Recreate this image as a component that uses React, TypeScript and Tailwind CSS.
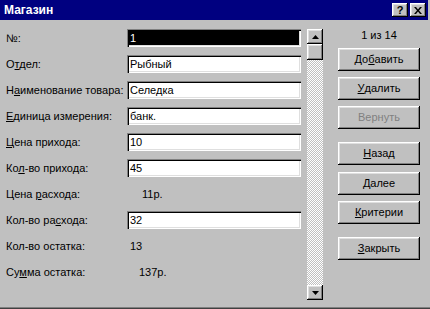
import React from "react";

const raised =
  "shadow-[inset_-1px_-1px_#000,inset_1px_1px_#fff,inset_-2px_-2px_#808080,inset_2px_2px_#dfdfdf]";
const sunken =
  "shadow-[inset_1px_1px_#808080,inset_2px_2px_#000,inset_-1px_-1px_#fff,inset_-2px_-2px_#dfdfdf]";

type Row = {
  label: React.ReactNode;
  value: string;
  kind: "input" | "selected" | "text";
  pad?: string;
};

const rows: Row[] = [
  { label: "№:", value: "1", kind: "selected" },
  { label: <>О<u>т</u>дел:</>, value: "Рыбный", kind: "input" },
  { label: <>Н<u>а</u>именование товара:</>, value: "Селедка", kind: "input" },
  { label: <><u>Е</u>диница измерения:</>, value: "банк.", kind: "input" },
  { label: <><u>Ц</u>ена прихода:</>, value: "10", kind: "input" },
  { label: <>Ко<u>л</u>-во прихода:</>, value: "45", kind: "input" },
  { label: <>Цена <u>р</u>асхода:</>, value: "11р.", kind: "text", pad: "pl-[15px]" },
  { label: <>Кол-во ра<u>с</u>хода:</>, value: "32", kind: "input" },
  { label: "Кол-во остатка:", value: "13", kind: "text", pad: "pl-[3px]" },
  { label: <>Су<u>м</u>ма остатка:</>, value: "137р.", kind: "text", pad: "pl-[12px]" },
];

function Arrow({ down }: { down?: boolean }) {
  return (
    <svg width="7" height="4" viewBox="0 0 7 4">
      {down ? <polygon points="0,0 7,0 3.5,4" fill="#000" /> : <polygon points="0,4 7,4 3.5,0" fill="#000" />}
    </svg>
  );
}

function Btn({
  children,
  className = "",
  disabled,
}: {
  children: React.ReactNode;
  className?: string;
  disabled?: boolean;
}) {
  return (
    <div
      className={`h-[23px] w-[82px] flex items-center justify-center bg-[#c0c0c0] ${raised} ${
        disabled ? "text-[#808080]" : "text-black"
      } ${className}`}
    >
      {children}
    </div>
  );
}

export default function App() {
  return (
    <div className="w-[430px] h-[309px] bg-[#c0c0c0] flex flex-col font-['Liberation_Sans',Arial,sans-serif] text-[11px] text-black shadow-[inset_0_-1px_#404040,inset_0_-2px_#808080] overflow-hidden">
      {/* Title bar */}
      <div className="h-[20px] mr-[2px] bg-[#000080] flex items-center justify-between pl-[4px] pr-[2px]">
        <span className="text-white font-bold text-[12px] leading-none">Магазин</span>
        <div className="flex gap-[2px]">
          <div className={`w-[16px] h-[14px] bg-[#c0c0c0] ${raised} flex items-center justify-center font-bold text-[11px] leading-none`}>
            ?
          </div>
          <div className={`w-[16px] h-[14px] bg-[#c0c0c0] ${raised} flex items-center justify-center`}>
            <svg width="8" height="7" viewBox="0 0 8 7">
              <path d="M0 0h2l2 2.5L6 0h2L5 3.5 8 7H6L4 4.5 2 7H0l3-3.5z" fill="#000" />
            </svg>
          </div>
        </div>
      </div>

      <div className="flex flex-1">
        {/* Fields */}
        <div className="w-[307px] pt-[5px] flex flex-col">
          {rows.map((r, i) => (
            <div key={i} className="h-[26px] flex items-center">
              <span className="w-[127px] pl-[6px] whitespace-nowrap">{r.label}</span>
              {r.kind === "text" ? (
                <span className={r.pad}>{r.value}</span>
              ) : (
                <div
                  className={`w-[174px] h-[18px] flex items-center pl-[3px] ${sunken} ${
                    r.kind === "selected" ? "bg-black text-white" : "bg-white"
                  }`}
                >
                  {r.value}
                </div>
              )}
            </div>
          ))}
        </div>

        {/* Scrollbar */}
        <div className="w-[16px] pt-[9px]">
          <div className="h-[271px] flex flex-col">
            <div className={`h-[15px] bg-[#c0c0c0] ${raised} flex items-center justify-center`}>
              <Arrow />
            </div>
            <div className={`h-[16px] bg-[#c0c0c0] ${raised}`} />
            <div className="flex-1 bg-[image:repeating-conic-gradient(#fff_0_25%,#c0c0c0_0_50%)] bg-[length:2px_2px]" />
            <div className={`h-[15px] bg-[#c0c0c0] ${raised} flex items-center justify-center`}>
              <Arrow down />
            </div>
          </div>
        </div>

        {/* Buttons */}
        <div className="pl-[15px] flex flex-col">
          <div className="w-[82px] h-[14px] mt-[8px] text-center leading-[14px]">1 из 14</div>
          <Btn className="mt-[6px]">
            До<u>б</u>авить
          </Btn>
          <Btn className="mt-[6px]">
            <u>У</u>далить
          </Btn>
          <Btn className="mt-[6px]" disabled>
            Вернуть
          </Btn>
          <Btn className="mt-[13px]">
            <u>Н</u>азад
          </Btn>
          <Btn className="mt-[7px]">
            <u>Д</u>алее
          </Btn>
          <Btn className="mt-[6px]">
            <u>К</u>ритерии
          </Btn>
          <Btn className="mt-[13px]">
            <u>З</u>акрыть
          </Btn>
        </div>
      </div>
    </div>
  );
}
